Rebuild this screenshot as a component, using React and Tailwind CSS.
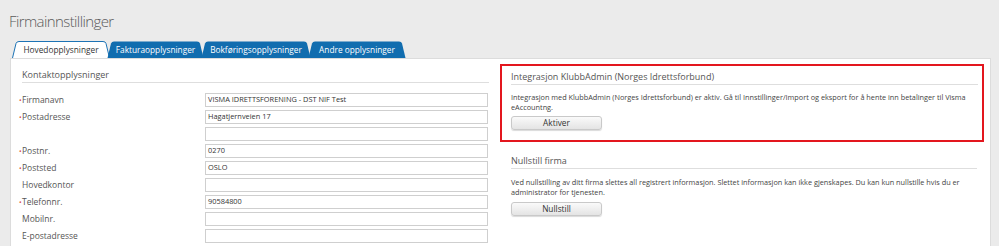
import React from "react";

const tabs = [
	{ label: "Hovedopplysninger", width: 98, active: true },
	{ label: "Fakturaopplysninger", width: 97 },
	{ label: "Bokføringsopplysninger", width: 110 },
	{ label: "Andre opplysninger", width: 98 },
];

const rows = [
	{ label: "Firmanavn", value: "VISMA IDRETTSFORENING - DST NIF Test", required: true },
	{ label: "Postadresse", value: "Hagatjernveien 17", required: true },
	{ label: "", value: "" },
	{ label: "Postnr.", value: "0270", required: true },
	{ label: "Poststed", value: "OSLO", required: true },
	{ label: "Hovedkontor", value: "" },
	{ label: "Telefonnr.", value: "90584800", required: true },
	{ label: "Mobilnr.", value: "" },
	{ label: "E-postadresse", value: "" },
];

const Tab = ({ label, width, active }) => {
	const w = width;
	const d = `M0.5,17 L4,2.5 Q4.7,0.5 7,0.5 L${w - 7},0.5 Q${w - 4.5},0.5 ${w - 4},2.5 L${w - 0.5},17`;
	return (
		<div className="relative h-[17px] -mr-[3px] flex items-center justify-center" style={{ width: w }}>
			<svg className="absolute inset-0" width={w} height="17" viewBox={`0 0 ${w} 17`}>
				{active ? (
					<path d={d} fill="#ffffff" stroke="#1d73b5" strokeWidth="1" />
				) : (
					<path d={d + " Z"} fill="#116daf" />
				)}
			</svg>
			<span className={`relative text-[8.3px] leading-none pt-[2px] ${active ? "text-[#333]" : "text-white"}`}>
				{label}
			</span>
		</div>
	);
};

const Button = ({ children }) => (
	<button className="w-[91px] h-[14px] rounded-[3px] border border-[#c9c9c9] bg-gradient-to-b from-[#fafafa] to-[#e4e4e4] shadow-[0_1px_1px_rgba(0,0,0,0.15)] text-[8.3px] leading-none text-[#333]">
		{children}
	</button>
);

const Heading = ({ children }) => (
	<h2 className="text-[9px] leading-[12px] pb-[1px] text-[#555] border-b border-[#dedede]">{children}</h2>
);

export default function App() {
	return (
		<div className="w-[999px] h-[246px] overflow-hidden bg-[#ebebeb] font-['Open_Sans',sans-serif]">
			<h1 className="pl-[9px] pt-[11px] text-[15px] leading-[20px] font-light tracking-[-0.6px] text-[#5a5a5a]">
				Firmainnstillinger
			</h1>

			{/* Tabs */}
			<div className="flex pl-[12px] mt-[10px]">
				{tabs.map((t) => (
					<Tab key={t.label} {...t} />
				))}
			</div>

			<div className="ml-[10px] w-[981px] h-[200px] bg-white border border-[#dcdcdc] flex">
				{/* Kontaktopplysninger */}
				<div className="w-[478px] pl-[8px] pt-[10px]">
					<div className="ml-[3px]">
						<Heading>Kontaktopplysninger</Heading>
					</div>
					<div className="mt-[10px] flex flex-col gap-[3px]">
						{rows.map((r, i) => (
							<div key={i} className="flex items-center h-[14px]">
								<span className="w-[3px] text-[#d9534f] text-[7px] leading-none">{r.required ? "•" : ""}</span>
								<span className="w-[183px] text-[8.5px] text-[#555]">{r.label}</span>
								<div className="w-[283px] h-[14px] border border-[#cfcfcf] px-[2px] flex items-center text-[7.4px] text-[#333]">
									{r.value}
								</div>
							</div>
						))}
					</div>
				</div>

				{/* Right column */}
				<div className="ml-[11px] w-[484px] pt-[5px]">
					<div className="border-2 border-[#e3161e] pl-[9px] pr-[4px] pt-[5px] pb-[10px]">
						<Heading>Integrasjon KlubbAdmin (Norges Idrettsforbund)</Heading>
						<p className="mt-[7px] text-[7.3px] leading-[10px] text-[#444]">
							Integrasjon med KlubbAdmin (Norges Idrettsforbund) er aktiv. Gå til Innstillinger/Import og eksport for å hente inn betalinger til Visma eAccountng.
						</p>
						<div className="mt-[4px] flex">
							<Button>Aktiver</Button>
						</div>
					</div>

					<div className="pl-[11px] pr-[7px] mt-[13px]">
						<Heading>Nullstill firma</Heading>
						<p className="mt-[8px] text-[7.3px] leading-[10px] text-[#444]">
							Ved nullstilling av ditt firma slettes all registrert informasjon. Slettet informasjon kan ikke gjenskapes. Du kan kun nullstille hvis du er administrator for tjenesten.
						</p>
						<div className="mt-[5px] flex">
							<Button>Nullstill</Button>
						</div>
					</div>
				</div>
			</div>
		</div>
	);
}
